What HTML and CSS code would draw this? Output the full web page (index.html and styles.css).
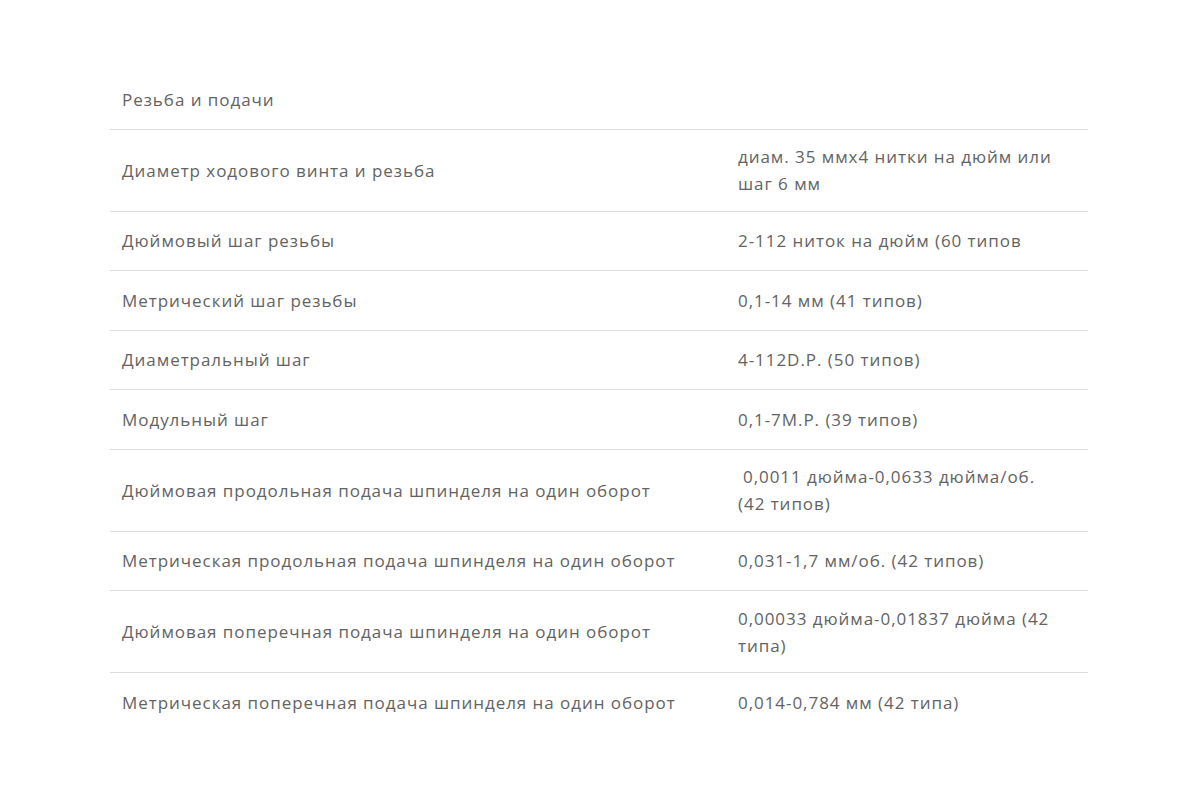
FILE: index.html
```html
<!DOCTYPE html>
<html lang="ru">
<head>
<meta charset="utf-8">
<title>Резьба и подачи</title>
<link rel="stylesheet" href="styles.css">
</head>
<body>
<div class="page">
  <div class="specs">
    <div class="row head"><div class="cell">Резьба и подачи</div></div>
    <div class="row"><div class="cell name">Диаметр ходового винта и резьба</div><div class="cell val">диам. 35 ммх4 нитки на дюйм или шаг 6 мм</div></div>
    <div class="row"><div class="cell name">Дюймовый шаг резьбы</div><div class="cell val">2-112 ниток на дюйм (60 типов</div></div>
    <div class="row"><div class="cell name">Метрический шаг резьбы</div><div class="cell val">0,1-14 мм (41 типов)</div></div>
    <div class="row"><div class="cell name">Диаметральный шаг</div><div class="cell val">4-112D.P. (50 типов)</div></div>
    <div class="row"><div class="cell name">Модульный шаг</div><div class="cell val">0,1-7M.P. (39 типов)</div></div>
    <div class="row"><div class="cell name">Дюймовая продольная подача шпинделя на один оборот</div><div class="cell val"><span class="indent">0,0011 дюйма-0,0633 дюйма/об.</span> (42&nbsp;типов)</div></div>
    <div class="row"><div class="cell name">Метрическая продольная подача шпинделя на один оборот</div><div class="cell val">0,031-1,7 мм/об. (42 типов)</div></div>
    <div class="row"><div class="cell name">Дюймовая поперечная подача шпинделя на один оборот</div><div class="cell val">0,00033 дюйма-0,01837 дюйма (42 типа)</div></div>
    <div class="row last"><div class="cell name">Метрическая поперечная подача шпинделя на один оборот</div><div class="cell val">0,014-0,784 мм (42 типа)</div></div>
  </div>
</div>
</body>
</html>
```

FILE: styles.css
```css
html, body {
  margin: 0;
  padding: 0;
  background: #ffffff;
}
.page {
  padding: 70px 0 0 110px;
}
.specs {
  width: 978px;
  font-family: "Open Sans", "Liberation Sans", sans-serif;
  font-size: 17px;
  letter-spacing: 0.95px;
  color: #636363;
  line-height: 27px;
}
.row {
  display: grid;
  grid-template-columns: 615px 1fr;
  align-items: center;
  box-sizing: border-box;
  min-height: 59.5px;
  border-bottom: 1px solid #dddddd;
}
.row.last {
  border-bottom: none;
}
.cell {
  padding: 13.5px 12px;
}
.val {
  padding-left: 13px;
}
.indent {
  padding-left: 5px;
}
.head .cell {
  grid-column: 1 / span 2;
}
```
